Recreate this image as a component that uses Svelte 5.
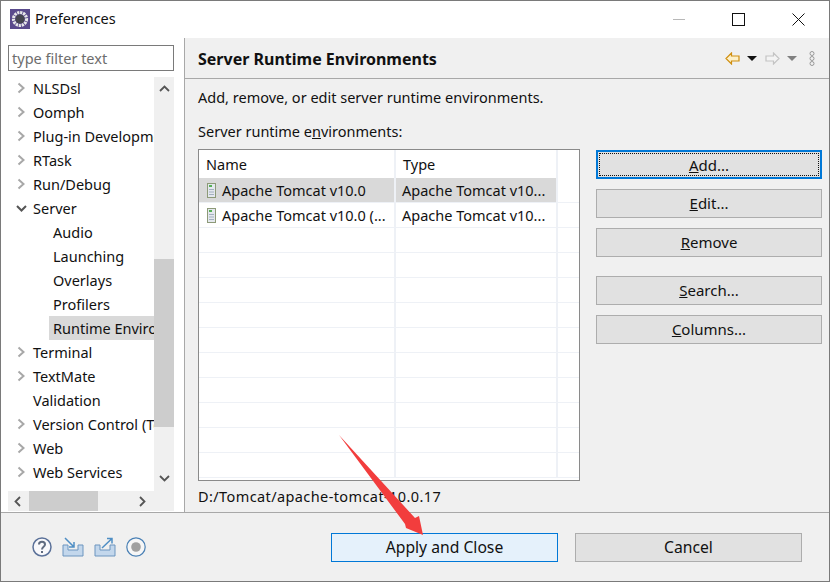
<script lang="ts">
  type TreeItem = { label: string; arrow?: 'right' | 'down'; depth?: number; selected?: boolean };

  const tree: TreeItem[] = [
    { label: 'NLSDsl', arrow: 'right' },
    { label: 'Oomph', arrow: 'right' },
    { label: 'Plug-in Development', arrow: 'right' },
    { label: 'RTask', arrow: 'right' },
    { label: 'Run/Debug', arrow: 'right' },
    { label: 'Server', arrow: 'down' },
    { label: 'Audio', depth: 1 },
    { label: 'Launching', depth: 1 },
    { label: 'Overlays', depth: 1 },
    { label: 'Profilers', depth: 1 },
    { label: 'Runtime Environments', depth: 1, selected: true },
    { label: 'Terminal', arrow: 'right' },
    { label: 'TextMate', arrow: 'right' },
    { label: 'Validation' },
    { label: 'Version Control (Team)', arrow: 'right' },
    { label: 'Web', arrow: 'right' },
    { label: 'Web Services', arrow: 'right' }
  ];

  const runtimes = [
    { name: 'Apache Tomcat v10.0', type: 'Apache Tomcat v10...', selected: true },
    { name: 'Apache Tomcat v10.0 (...', type: 'Apache Tomcat v10...', selected: false }
  ];
  const emptyRows = Array.from({ length: 10 }, (_, i) => i);
</script>

<div class="window">
  <header class="titlebar">
    <svg class="appIcon" viewBox="0 0 20 20" width="20" height="20">
      <rect width="20" height="20" fill="#5a4a8c" />
      <circle cx="10" cy="10" r="6.5" fill="none" stroke="#e8e8e8" stroke-width="3.2" stroke-dasharray="2.2 0.8" />
      <circle cx="10" cy="10" r="4.6" fill="#45454f" />
    </svg>
    <span class="titlebar__text">Preferences</span>
    <div class="winButtons">
      <span class="winMin"></span>
      <span class="winMax"></span>
      <svg width="13" height="13" viewBox="0 0 13 13"><path d="M0.5 0.5 12.5 12.5M12.5 0.5 0.5 12.5" stroke="#111" stroke-width="1" /></svg>
    </div>
  </header>

  <div class="main">
    <aside class="side">
      <div class="filter">type filter text</div>
      <div class="treeBox">
        <div class="treeRow">
          <div class="tree">
            {#each tree as item (item.label)}
              <div class="tree__row" class:tree__row--child={item.depth === 1}>
                {#if item.arrow === 'right'}
                  <svg class="tree__arrow" width="9" height="12" viewBox="0 0 9 12"><path d="M1.5 1.5 6.5 6 1.5 10.5" fill="none" stroke="#a8a8a8" stroke-width="2" /></svg>
                {:else if item.arrow === 'down'}
                  <svg class="tree__arrow" width="11" height="9" viewBox="0 0 11 9"><path d="M1 2 5.5 6.5 10 2" fill="none" stroke="#555" stroke-width="2" /></svg>
                {:else if !item.depth}
                  <span class="tree__arrow"></span>
                {/if}
                <span class="tree__label" class:tree__label--selected={item.selected}>{item.label}</span>
              </div>
            {/each}
          </div>
          <div class="vscroll">
            <svg width="11" height="7" viewBox="0 0 11 7"><path d="M1 6 5.5 1.5 10 6" fill="none" stroke="#555" stroke-width="1.8" /></svg>
            <div class="vscroll__track"><div class="vscroll__thumb"></div></div>
            <svg width="11" height="7" viewBox="0 0 11 7"><path d="M1 1 5.5 5.5 10 1" fill="none" stroke="#555" stroke-width="1.8" /></svg>
          </div>
        </div>
        <div class="hscroll">
          <svg width="7" height="11" viewBox="0 0 7 11"><path d="M6 1 1.5 5.5 6 10" fill="none" stroke="#555" stroke-width="1.8" /></svg>
          <div class="hscroll__track"><div class="hscroll__thumb"></div></div>
          <svg width="7" height="11" viewBox="0 0 7 11"><path d="M1 1 5.5 5.5 1 10" fill="none" stroke="#555" stroke-width="1.8" /></svg>
        </div>
      </div>
    </aside>

    <section class="page">
      <div class="page__header">
        <h1>Server Runtime Environments</h1>
        <div class="nav">
          <svg width="15" height="13" viewBox="0 0 15 13"><path d="M6.5 1 1 6.5 6.5 12V9H14V4H6.5Z" fill="#fdf0c8" stroke="#d08f10" stroke-width="1.2" /></svg>
          <span class="nav__caret"></span>
          <svg class="nav__fwd" width="15" height="13" viewBox="0 0 15 13"><path d="M8.5 1 14 6.5 8.5 12V9H1V4H8.5Z" fill="#f4f4f4" stroke="#c4c4c4" stroke-width="1.2" /></svg>
          <span class="nav__caret nav__caret--off"></span>
          <svg class="nav__menu" width="6" height="15" viewBox="0 0 6 15">
            <circle cx="3" cy="2.5" r="2" fill="none" stroke="#999" />
            <circle cx="3" cy="7.5" r="2" fill="none" stroke="#999" />
            <circle cx="3" cy="12.5" r="2" fill="none" stroke="#999" />
          </svg>
        </div>
      </div>

      <div class="page__body">
        <p class="intro">Add, remove, or edit server runtime environments.</p>
        <p class="caption">Server runtime e<u>n</u>vironments:</p>

        <div class="content">
          <div class="table">
            <div class="table__row table__row--head">
              <div class="table__cell">Name</div>
              <div class="table__cell">Type</div>
              <div class="table__cell"></div>
            </div>
            {#each runtimes as rt (rt.name)}
              <div class="table__row">
                <div class="table__cell" class:table__cell--selected={rt.selected}>
                  <svg class="serverIcon" width="9" height="15" viewBox="0 0 9 15">
                    <rect x="0.5" y="0.5" width="8" height="14" fill="#e4e8ee" stroke="#8d9a78" />
                    <rect x="2" y="2" width="3" height="2" fill="#55b055" />
                    <path d="M2 6.5H7M2 9H7M2 11.5H7" stroke="#a4b0c0" />
                  </svg>
                  {rt.name}
                </div>
                <div class="table__cell" class:table__cell--selected={rt.selected}>{rt.type}</div>
                <div class="table__cell"></div>
              </div>
            {/each}
            {#each emptyRows as r (r)}
              <div class="table__row">
                <div class="table__cell"></div>
                <div class="table__cell"></div>
                <div class="table__cell"></div>
              </div>
            {/each}
          </div>

          <div class="actions">
            <button class="btn btn--default"><span class="btn__focus"><u>A</u>dd...</span></button>
            <button class="btn btn--side"><u>E</u>dit...</button>
            <button class="btn btn--side"><u>R</u>emove</button>
            <button class="btn btn--side btn--gap"><u>S</u>earch...</button>
            <button class="btn btn--side"><u>C</u>olumns...</button>
          </div>
        </div>

        <p class="path">D:/Tomcat/apache-tomcat-10.0.17</p>
      </div>
    </section>
  </div>

  <footer class="footer">
    <div class="footer__icons">
      <svg width="20" height="20" viewBox="0 0 20 20">
        <circle cx="10" cy="10" r="9" fill="#f8f8fb" stroke="#5b7199" stroke-width="1.5" />
        <path d="M7 7.5C7 3.8 13 3.8 13 7.5 13 10 10 9.6 10 12.5" fill="none" stroke="#5f6b80" stroke-width="2" />
        <rect x="9" y="14" width="2" height="2" fill="#5f6b80" />
      </svg>
      <svg width="22" height="20" viewBox="0 0 22 20">
        <path d="M1 8V19H21V8H16V13H6V8Z" fill="#c3d7ec" stroke="#6d95bf" />
        <path d="M3 1 12 10M12 5V10H7" fill="none" stroke="#4f8ec4" stroke-width="1.5" />
      </svg>
      <svg width="22" height="20" viewBox="0 0 22 20">
        <path d="M1 8V19H21V8H16V13H6V8Z" fill="#c3d7ec" stroke="#6d95bf" />
        <path d="M8 11 18 1.5M13 1.5H18V6.5" fill="none" stroke="#4f8ec4" stroke-width="1.5" />
      </svg>
      <svg width="20" height="20" viewBox="0 0 20 20">
        <circle cx="10" cy="10" r="9.2" fill="#f6f6f6" stroke="#4a80b5" stroke-width="1.2" />
        <circle cx="10" cy="10" r="4.8" fill="#a0a0a0" />
      </svg>
    </div>
    <div class="footer__buttons">
      <button class="btn btn--apply">Apply and Close</button>
      <button class="btn btn--cancel">Cancel</button>
    </div>
  </footer>

  <!-- annotation arrow drawn over the dialog -->
  <svg class="annotation" width="100" height="110" viewBox="0 0 100 110">
    <path d="M1 1 77 84 81 82 85 101 68 94 67 90Z" fill="#f23d3d" />
  </svg>
</div>

<style>
  :global(body) {
    margin: 0;
  }

  .window {
    position: relative;
    width: 830px;
    height: 582px;
    box-sizing: border-box;
    border: 1px solid #7a7a7a;
    display: flex;
    flex-direction: column;
    background: #f0f0f0;
    color: #111;
    font-family: "Noto Sans", "Open Sans", sans-serif;
    font-size: 14.5px;
    overflow: hidden;
  }

  .titlebar {
    height: 37px;
    flex: none;
    background: #fff;
    display: flex;
    align-items: center;
    padding-left: 9px;
  }

  .appIcon {
    margin: 0 5px 2px 0;
  }

  .titlebar__text {
    font-size: 14.5px;
    margin-bottom: 3px;
  }

  .winButtons {
    margin-left: auto;
    display: flex;
    align-items: center;
    gap: 47px;
    padding-right: 24px;
  }

  .winMin {
    width: 12px;
    height: 1px;
    background: #b8b8b8;
  }

  .winMax {
    width: 11px;
    height: 11px;
    border: 1px solid #111;
  }

  .main {
    flex: 1;
    min-height: 0;
    display: flex;
  }

  .side {
    width: 184px;
    flex: none;
    box-sizing: border-box;
    background: #fff;
    border-right: 1px solid #a8a8a8;
    padding: 7px 10px 0 7px;
    display: flex;
    flex-direction: column;
  }

  .filter {
    height: 26px;
    box-sizing: border-box;
    border: 1px solid #7a7a7a;
    padding-left: 3px;
    line-height: 24px;
    color: #6d6d6d;
    flex: none;
  }

  .treeBox {
    margin-top: 6px;
    flex: 1;
    min-height: 0;
    display: flex;
    flex-direction: column;
  }

  .treeRow {
    flex: 1;
    min-height: 0;
    display: flex;
  }

  .tree {
    flex: 1;
    min-width: 0;
    overflow: hidden;
    margin-top: -1px;
  }

  .tree__row {
    height: 24px;
    display: flex;
    align-items: center;
    white-space: nowrap;
    padding-left: 8px;
  }

  .tree__row--child {
    padding-left: 45px;
  }

  .tree__arrow {
    width: 11px;
    flex: none;
    margin-right: 6px;
  }

  .tree__label {
    line-height: 24px;
    padding: 0 4px 0 0;
  }

  .tree__label--selected {
    background: #d9d9d9;
    margin-left: -4px;
    padding-left: 4px;
  }

  .vscroll {
    width: 20px;
    flex: none;
    background: #f0f0f0;
    display: flex;
    flex-direction: column;
    align-items: center;
    padding: 8px 0 9px;
    box-sizing: border-box;
    gap: 8px;
  }

  .vscroll__track {
    flex: 1;
    width: 100%;
    padding-top: 159px;
    box-sizing: border-box;
    padding-bottom: 40px;
    display: flex;
  }

  .vscroll__thumb {
    flex: 1;
    background: #cdcdcd;
  }

  .hscroll {
    height: 20px;
    flex: none;
    background: #f0f0f0;
    display: flex;
    align-items: center;
    padding-left: 6px;
    padding-right: 28px;
    gap: 8px;
    margin-bottom: 1px;
  }

  .hscroll__track {
    flex: 1;
    height: 100%;
  }

  .hscroll__thumb {
    width: 69px;
    height: 100%;
    background: #cdcdcd;
  }

  .page {
    flex: 1;
    min-width: 0;
    display: flex;
    flex-direction: column;
  }

  .page__header {
    height: 41px;
    flex: none;
    box-sizing: border-box;
    border-bottom: 1px solid #a8a8a8;
    display: flex;
    align-items: center;
    padding: 1px 14px 0 13px;
  }

  h1 {
    margin: 0;
    font-size: 16px;
    font-weight: 700;
    color: #111;
  }

  .nav {
    margin-left: auto;
    display: flex;
    align-items: center;
  }

  .nav__caret {
    width: 0;
    height: 0;
    border-left: 5px solid transparent;
    border-right: 5px solid transparent;
    border-top: 5px solid #111;
    margin-left: 7px;
  }

  .nav__caret--off {
    border-top-color: #808080;
  }

  .nav__fwd {
    margin-left: 8px;
  }

  .nav__menu {
    margin-left: 12px;
  }

  .page__body {
    flex: 1;
    min-height: 0;
    padding: 7px 8px 0 13px;
  }

  .intro,
  .caption,
  .path {
    margin: 0;
    line-height: 22px;
    white-space: nowrap;
  }

  .caption {
    margin-top: 12px;
  }

  .content {
    display: flex;
    margin-top: 7px;
    gap: 16px;
  }

  .table {
    width: 382px;
    height: 332px;
    flex: none;
    box-sizing: border-box;
    border: 1px solid #8a8a8a;
    background: #fff;
    overflow: hidden;
  }

  .table__row {
    display: grid;
    grid-template-columns: 197px 162px 1fr;
    height: 25px;
    box-sizing: border-box;
    border-bottom: 1px solid #eef1f6;
  }

  .table__row--head {
    height: 28px;
    border-bottom: none;
  }

  .table__row--head .table__cell {
    padding-left: 7px;
  }

  .table__cell {
    border-right: 2px solid #eef1f6;
    display: flex;
    align-items: center;
    padding-left: 6px;
    white-space: nowrap;
    overflow: hidden;
    min-width: 0;
  }

  .table__cell:last-child {
    border-right: none;
  }

  .table__cell--selected {
    background: #d9d9d9;
    border-right-color: #eef1f6;
  }

  .serverIcon {
    margin: 0 6px 0 2px;
    flex: none;
  }

  .actions {
    width: 226px;
    flex: none;
    display: flex;
    flex-direction: column;
    gap: 10px;
    margin-top: 1px;
  }

  .btn {
    height: 29px;
    box-sizing: border-box;
    border: 1px solid #adadad;
    background: #e1e1e1;
    font: inherit;
    font-size: 15px;
    color: #111;
    padding: 0;
  }

  .btn--side {
    padding-bottom: 2px;
  }

  .btn--default {
    border: 2px solid #0078d7;
    padding: 1px;
  }

  .btn__focus {
    display: flex;
    align-items: center;
    justify-content: center;
    height: 100%;
    border: 1px dotted #111;
    box-sizing: border-box;
  }

  .btn--gap {
    margin-top: 9px;
  }

  .path {
    margin-top: 4px;
    letter-spacing: 0.4px;
  }

  .footer {
    height: 69px;
    flex: none;
    box-sizing: border-box;
    border-top: 1px solid #a8a8a8;
    display: flex;
    align-items: center;
    padding: 0 27px 0 31px;
    justify-content: space-between;
  }

  .footer__icons {
    display: flex;
    align-items: center;
    gap: 10px;
  }

  .footer__buttons {
    display: flex;
    gap: 17px;
  }

  .btn--apply,
  .btn--cancel {
    width: 227px;
    font-size: 15.7px;
  }

  .btn--apply {
    background: #e5f1fb;
    border-color: #0078d7;
  }

  .annotation {
    position: absolute;
    left: 337px;
    top: 433px;
  }
</style>
